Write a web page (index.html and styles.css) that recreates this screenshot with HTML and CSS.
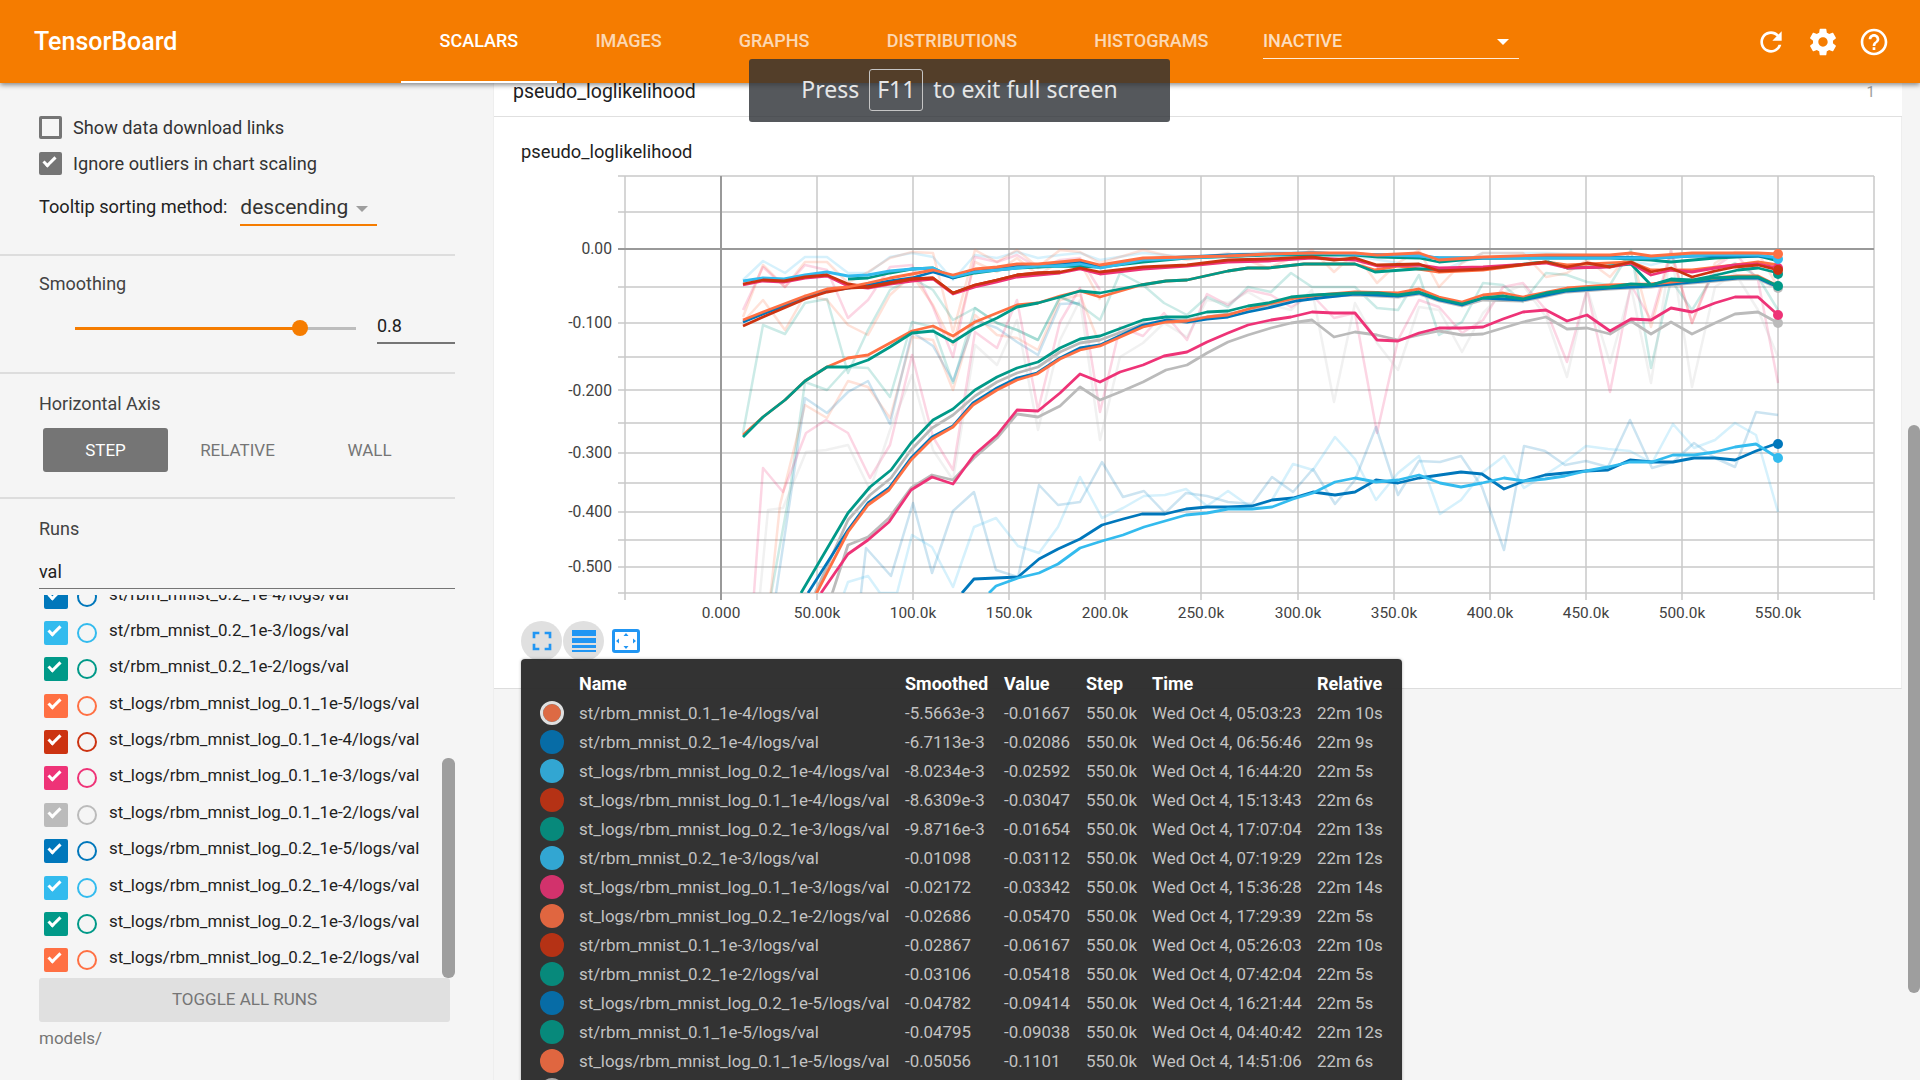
FILE: index.html
```html
<!DOCTYPE html>
<html lang="en">
<head>
  <meta charset="UTF-8">
  <title>TensorBoard</title>
  <link rel="stylesheet" href="styles.css">
</head>
<body>

  <!-- Top bar -->
  <header class="topbar">
    <div class="brand">TensorBoard</div>
    <nav class="tabs">
      <div class="tab selected">SCALARS</div>
      <div class="tab">IMAGES</div>
      <div class="tab">GRAPHS</div>
      <div class="tab">DISTRIBUTIONS</div>
      <div class="tab">HISTOGRAMS</div>
    </nav>
    <div class="inactive">
      <span>INACTIVE</span>
      <i class="inactive-arrow"></i>
    </div>
    <div class="top-icons">
      <svg class="top-icon" viewBox="0 0 24 24"><path d="M17.65 6.35C16.2 4.9 14.21 4 12 4c-4.42 0-7.99 3.58-7.99 8s3.57 8 7.99 8c3.73 0 6.84-2.55 7.73-6h-2.08c-.82 2.33-3.04 4-5.65 4-3.31 0-6-2.69-6-6s2.69-6 6-6c1.66 0 3.14.69 4.22 1.78L13 11h7V4l-2.35 2.35z"/></svg>
      <svg class="top-icon" viewBox="0 0 24 24"><path d="M19.43 12.98c.04-.32.07-.64.07-.98s-.03-.66-.07-.98l2.11-1.65c.19-.15.24-.42.12-.64l-2-3.46c-.12-.22-.39-.3-.61-.22l-2.49 1c-.52-.4-1.08-.73-1.69-.98l-.38-2.65C14.46 2.18 14.25 2 14 2h-4c-.25 0-.46.18-.49.42l-.38 2.65c-.61.25-1.17.59-1.69.98l-2.49-1c-.23-.09-.49 0-.61.22l-2 3.46c-.13.22-.07.49.12.64l2.11 1.65c-.04.32-.07.65-.07.98s.03.66.07.98l-2.11 1.65c-.19.15-.24.42-.12.64l2 3.46c.12.22.39.3.61.22l2.49-1c.52.4 1.08.73 1.69.98l.38 2.65c.03.24.24.42.49.42h4c.25 0 .46-.18.49-.42l.38-2.65c.61-.25 1.17-.59 1.69-.98l2.49 1c.23.09.49 0 .61-.22l2-3.46c.12-.22.07-.49-.12-.64l-2.11-1.65zM12 15.5c-1.93 0-3.5-1.57-3.5-3.5s1.57-3.5 3.5-3.5 3.5 1.57 3.5 3.5-1.57 3.5-3.5 3.5z"/></svg>
      <svg class="top-icon" viewBox="0 0 24 24"><path d="M11 18h2v-2h-2v2zm1-16C6.48 2 2 6.48 2 12s4.48 10 10 10 10-4.48 10-10S17.52 2 12 2zm0 18c-4.41 0-8-3.59-8-8s3.59-8 8-8 8 3.59 8 8-3.59 8-8 8zm0-14c-2.21 0-4 1.79-4 4h2c0-1.1.9-2 2-2s2 .9 2 2c0 2-3 1.75-3 5h2c0-2.25 3-2.5 3-5 0-2.21-1.79-4-4-4z"/></svg>
    </div>
  </header>

  <!-- Browser full screen notice -->
  <div class="fullscreen-note">
    <span>Press</span>
    <span class="key">F11</span>
    <span>to exit full screen</span>
  </div>

  <div class="page">

    <!-- Sidebar -->
    <aside class="sidebar">
      <section class="side-section options">
        <label class="option"><i class="box"></i>Show data download links</label>
        <label class="option"><i class="box checked"></i>Ignore outliers in chart scaling</label>
        <div class="sorting">
          <span>Tooltip sorting method:</span>
          <div class="select">descending<i class="select-arrow"></i></div>
        </div>
      </section>

      <section class="side-section smoothing">
        <div class="side-title">Smoothing</div>
        <div class="slider-row">
          <div class="slider">
            <div class="slider-fill" style="width: 80%"></div>
            <div class="slider-thumb" style="left: 80%"></div>
          </div>
          <div class="slider-value">0.8</div>
        </div>
      </section>

      <section class="side-section axis">
        <div class="side-title">Horizontal Axis</div>
        <div class="axis-buttons">
          <div class="axis-btn active">STEP</div>
          <div class="axis-btn">RELATIVE</div>
          <div class="axis-btn">WALL</div>
        </div>
      </section>

      <section class="runs">
        <div class="side-title">Runs</div>
        <div class="run-filter">val</div>
        <div class="run-list">
          <div class="run-rows">
            <div class="run c-blue"><i class="run-box"></i><i class="run-dot"></i><span>st/rbm_mnist_0.2_1e-4/logs/val</span></div>
            <div class="run c-cyan"><i class="run-box"></i><i class="run-dot"></i><span>st/rbm_mnist_0.2_1e-3/logs/val</span></div>
            <div class="run c-teal"><i class="run-box"></i><i class="run-dot"></i><span>st/rbm_mnist_0.2_1e-2/logs/val</span></div>
            <div class="run c-orange"><i class="run-box"></i><i class="run-dot"></i><span>st_logs/rbm_mnist_log_0.1_1e-5/logs/val</span></div>
            <div class="run c-red"><i class="run-box"></i><i class="run-dot"></i><span>st_logs/rbm_mnist_log_0.1_1e-4/logs/val</span></div>
            <div class="run c-pink"><i class="run-box"></i><i class="run-dot"></i><span>st_logs/rbm_mnist_log_0.1_1e-3/logs/val</span></div>
            <div class="run c-gray"><i class="run-box"></i><i class="run-dot"></i><span>st_logs/rbm_mnist_log_0.1_1e-2/logs/val</span></div>
            <div class="run c-blue"><i class="run-box"></i><i class="run-dot"></i><span>st_logs/rbm_mnist_log_0.2_1e-5/logs/val</span></div>
            <div class="run c-cyan"><i class="run-box"></i><i class="run-dot"></i><span>st_logs/rbm_mnist_log_0.2_1e-4/logs/val</span></div>
            <div class="run c-teal"><i class="run-box"></i><i class="run-dot"></i><span>st_logs/rbm_mnist_log_0.2_1e-3/logs/val</span></div>
            <div class="run c-orange"><i class="run-box"></i><i class="run-dot"></i><span>st_logs/rbm_mnist_log_0.2_1e-2/logs/val</span></div>
          </div>
          <div class="run-scroll"></div>
        </div>
        <div class="toggle-runs">TOGGLE ALL RUNS</div>
        <div class="logdir">models/</div>
      </section>
    </aside>

    <!-- Charts -->
    <main class="content">
      <div class="category">
        <span>pseudo_loglikelihood</span>
        <span class="category-count">1</span>
      </div>

      <div class="card">
        <div class="card-title">pseudo_loglikelihood</div>

        <svg class="chart" viewBox="540 170 1350 450" width="1350" height="450">
          <g class="grid-h">
            <line x1="618" x2="1874" y1="176" y2="176"/>
            <line x1="618" x2="1874" y1="212" y2="212"/>
            <line x1="618" x2="1874" y1="287" y2="287"/>
            <line x1="618" x2="1874" y1="323" y2="323"/>
            <line x1="618" x2="1874" y1="357" y2="357"/>
            <line x1="618" x2="1874" y1="390" y2="390"/>
            <line x1="618" x2="1874" y1="423" y2="423"/>
            <line x1="618" x2="1874" y1="453" y2="453"/>
            <line x1="618" x2="1874" y1="483" y2="483"/>
            <line x1="618" x2="1874" y1="512" y2="512"/>
            <line x1="618" x2="1874" y1="540" y2="540"/>
            <line x1="618" x2="1874" y1="567" y2="567"/>
            <line x1="618" x2="1874" y1="593" y2="593"/>
          </g>
          <g class="grid-v">
            <line x1="625" x2="625" y1="176" y2="600"/>
            <line x1="817" x2="817" y1="176" y2="600"/>
            <line x1="913" x2="913" y1="176" y2="600"/>
            <line x1="1009" x2="1009" y1="176" y2="600"/>
            <line x1="1105" x2="1105" y1="176" y2="600"/>
            <line x1="1201" x2="1201" y1="176" y2="600"/>
            <line x1="1298" x2="1298" y1="176" y2="600"/>
            <line x1="1394" x2="1394" y1="176" y2="600"/>
            <line x1="1490" x2="1490" y1="176" y2="600"/>
            <line x1="1586" x2="1586" y1="176" y2="600"/>
            <line x1="1682" x2="1682" y1="176" y2="600"/>
            <line x1="1778" x2="1778" y1="176" y2="600"/>
            <line x1="1874" x2="1874" y1="176" y2="600"/>
          </g>
          <g class="grid-zero">
            <line x1="618" x2="1874" y1="249" y2="249"/>
            <line x1="721" x2="721" y1="176" y2="600"/>
          </g>

          <g class="tick-y">
            <text x="612" y="254">0.00</text>
            <text x="612" y="328">-0.100</text>
            <text x="612" y="396">-0.200</text>
            <text x="612" y="458">-0.300</text>
            <text x="612" y="517">-0.400</text>
            <text x="612" y="572">-0.500</text>
          </g>
          <g class="tick-x">
            <text x="721" y="618">0.000</text>
            <text x="817" y="618">50.00k</text>
            <text x="913" y="618">100.0k</text>
            <text x="1009" y="618">150.0k</text>
            <text x="1105" y="618">200.0k</text>
            <text x="1201" y="618">250.0k</text>
            <text x="1298" y="618">300.0k</text>
            <text x="1394" y="618">350.0k</text>
            <text x="1490" y="618">400.0k</text>
            <text x="1586" y="618">450.0k</text>
            <text x="1682" y="618">500.0k</text>
            <text x="1778" y="618">550.0k</text>
          </g>

          <clipPath id="plot-area"><rect x="625" y="176" width="1249" height="417"/></clipPath>

          <g clip-path="url(#plot-area)">
            <!-- raw values -->
            <g class="raw">
              <polyline class="c-cyan" points="743,280 763,261 785,273 805,257 827,257 848,273 868,273 890,257 912,253 933,257 953,280 975,255 997,258 1017,252 1038,258 1060,255 1080,253 1100,260 1143,253 1187,257 1268,252 1312,252 1355,256 1398,263 1439,272 1483,253 1546,253 1610,256 1651,265 1692,254 1735,254 1778,257"/>
              <polyline class="c-orange" points="743,317 763,265 785,287 805,262 827,262 848,283 868,272 890,258 912,252 933,253 953,332 975,250 997,262 1017,250 1038,267 1060,250 1080,252 1100,263 1143,250 1187,260 1228,253 1268,268 1312,250 1334,272 1355,253 1377,283 1398,263 1419,250 1439,287 1462,263 1483,253 1523,253 1546,277 1567,273 1587,260 1610,277 1631,252 1651,327 1671,253 1692,323 1715,263 1735,252 1758,253 1778,287"/>
              <polyline class="c-orange" points="743,322 763,300 785,330 805,295 827,300 848,325 868,335 890,295 912,275 933,305 953,345 975,262 997,272 1017,258 1038,275 1060,262 1080,262 1100,300"/>
              <polyline class="c-pink" points="743,310 763,267 785,287 805,265 827,270 848,318 868,300 890,267 912,265 933,307 953,357 975,257 997,262 1017,255 1038,268 1060,260 1080,258 1100,290"/>
              <polyline class="c-teal" points="743,433 763,325 785,334 805,303 827,299 848,373 868,330 890,290 912,278 933,290 953,320 975,308 997,323 1017,330 1038,340 1060,297 1080,305 1100,320 1120,273 1143,285 1164,303 1187,315 1207,297 1228,307 1248,287 1271,292 1291,273 1312,287 1334,287 1355,287 1377,308 1398,310 1419,275 1439,335 1462,322 1483,283 1503,285 1523,302 1546,273 1567,275 1587,282 1610,285 1631,250 1651,368 1671,280 1692,310 1715,273 1735,263 1758,277 1778,310"/>
              <polyline class="c-teal" points="770,600 790,490 805,382 827,390 848,367 868,368 890,397 912,322 933,327 953,383 975,308 997,323 1017,330 1038,340 1060,297 1080,305"/>
              <polyline class="c-orange" points="770,600 780,505 805,405 827,418 848,381 868,387 890,418 912,337 933,340 953,390 975,315 997,335 1017,338 1038,350 1060,300 1080,295 1100,345"/>
              <polyline class="c-blue" points="775,600 790,500 805,398 827,413 848,392 868,381 890,424 912,332 933,346 953,381 975,320 997,328 1017,342 1038,355 1060,304 1080,303"/>
              <polyline class="c-pink" points="754,593 763,468 783,492 806,433 826,420 848,433 870,478 890,445 912,355 933,437 953,470 975,332 997,348 1017,300 1038,410 1060,322 1080,288 1100,412 1120,327 1143,336 1164,313 1187,340 1207,294 1228,305 1248,290 1271,295 1291,307 1312,295 1334,318 1355,313 1377,433 1398,340 1419,300 1439,307 1462,333 1483,320 1503,287 1523,283 1546,310 1567,362 1587,290 1610,392 1631,285 1651,320 1671,250 1692,323 1715,267 1735,253 1758,280 1778,383"/>
              <polyline class="c-gray" points="760,593 768,510 783,508 806,452 826,450 848,445 870,490 890,430 912,375 933,450 953,480 975,345 997,365 1017,320 1038,430 1060,340 1080,300 1100,440 1120,357 1143,343 1164,323 1187,337 1207,300 1228,303 1248,292 1271,305 1291,310 1312,290 1334,402 1355,303 1377,343 1398,370 1419,307 1439,310 1462,352 1483,313 1503,293 1523,285 1546,317 1567,377 1587,288 1610,363 1631,287 1651,383 1671,250 1692,387 1715,287 1735,273 1758,310 1778,357"/>
              <polyline class="c-blue" points="861,593 866,548 891,576 913,503 932,573 953,511 974,492 996,570 1018,577 1039,485 1058,505 1080,502 1102,462 1123,497 1144,491 1165,513 1186,493 1207,496 1228,502 1252,504 1272,477 1293,492 1313,469 1335,504 1355,480 1376,427 1398,495 1419,461 1440,462 1461,456 1482,487 1504,550 1524,446 1545,451 1565,465 1586,461 1608,467 1630,420 1652,468 1673,462 1694,443 1715,458 1735,467 1756,412 1778,415"/>
              <polyline class="c-cyan" points="844,593 848,582 868,576 880,593 897,593 912,535 932,547 953,587 974,527 996,518 1018,546 1039,553 1058,527 1080,477 1102,518 1123,508 1144,496 1165,495 1186,489 1207,506 1228,491 1252,508 1272,500 1293,464 1313,470 1335,437 1355,459 1376,500 1398,473 1419,456 1440,514 1461,500 1482,473 1504,456 1524,488 1545,475 1565,462 1586,446 1608,449 1630,451 1652,463 1673,424 1694,448 1715,440 1735,423 1756,435 1778,512"/>
            </g>

            <!-- smoothed values -->
            <g class="smoothed">
              <polyline class="c-gray" points="812,600 848,520 870,495 891,478 911,450 932,428 953,415 975,396 997,382 1017,373 1038,367 1060,352 1080,343 1100,340 1143,324 1187,320 1228,314 1268,306 1314,297 1355,295 1398,297 1419,294 1439,301 1462,306 1483,300 1523,301 1567,292 1610,289 1651,287 1692,283 1738,279 1758,279 1778,288"/>
              <polyline class="c-gray" points="830,600 848,545 868,537 889,518 911,488 932,475 953,480 974,458 997,438 1017,414 1038,417 1060,406 1080,387 1100,400 1120,392 1143,382 1166,370 1187,365 1207,353 1228,342 1248,335 1271,328 1291,323 1312,320 1334,337 1355,332 1377,335 1398,340 1419,335 1439,331 1462,335 1483,334 1503,328 1523,322 1546,317 1567,329 1587,328 1610,334 1631,321 1651,334 1671,322 1692,334 1715,323 1735,314 1758,312 1778,323"/>
              <polyline class="c-blue" points="808,593 848,530 868,503 889,488 911,458 932,437 953,426 973,403 997,388 1017,378 1037,373 1060,358 1080,348 1100,345 1143,325 1166,320 1187,322 1207,319 1228,317 1248,312 1268,308 1296,301 1319,298 1355,294 1398,296 1419,293 1439,300 1462,305 1483,298 1523,300 1567,291 1610,288 1651,286 1692,282 1738,278 1758,278 1778,287"/>
              <polyline class="c-orange" points="813,600 848,532 868,505 889,490 911,460 932,439 953,427 973,405 997,390 1017,380 1037,374 1060,359 1080,350 1100,346 1143,327 1166,322 1187,321 1207,317 1228,315 1248,309 1268,304 1296,298 1319,295 1355,292 1398,293 1419,289 1439,297 1462,302 1483,295 1503,293 1523,297 1567,288 1610,285 1651,284 1692,280 1738,276 1758,276 1778,286"/>
              <polyline class="c-teal" points="801,593 848,513 870,487 891,470 911,443 933,420 953,409 975,390 997,377 1017,368 1038,362 1060,348 1080,339 1100,336 1143,320 1166,317 1187,317 1207,312 1228,311 1248,306 1268,303 1291,297 1314,295 1355,293 1378,293 1398,295 1419,292 1439,299 1462,304 1483,298 1503,296 1523,299 1546,293 1567,290 1587,288 1610,287 1631,284 1651,285 1671,280 1692,281 1712,278 1738,277 1758,277 1778,286"/>
              <polyline class="c-orange" points="743,435 763,417 785,400 805,381 827,367 848,358 868,355 890,343 912,331 933,326 953,336 975,322 997,313 1017,305 1038,303 1060,296 1080,291 1100,297 1141,285 1166,281 1187,280 1228,271 1248,268 1268,268 1304,264 1355,264 1375,270 1398,266 1439,272 1483,270 1546,262 1567,265 1610,263 1631,262 1651,270 1692,270 1735,265 1758,262 1778,265"/>
              <polyline class="c-teal" points="743,437 763,417 785,400 805,381 827,367 848,367 868,360 890,347 912,333 933,331 953,342 975,328 997,318 1017,307 1038,303 1060,297 1080,291 1100,293 1141,285 1166,281 1187,280 1228,271 1248,268 1268,268 1304,264 1355,264 1375,272 1416,269 1457,269 1498,267 1534,263 1549,262 1567,268 1600,267 1631,264 1651,285 1671,279 1692,280 1712,276 1738,270 1758,268 1778,273"/>
              <polyline class="c-teal" points="848,279 868,278 890,273 912,269 933,268 953,278 975,273 997,270 1017,268 1060,266 1100,267 1143,262 1187,258 1268,255 1355,255 1378,257 1419,258 1439,262 1483,258 1610,258 1651,260 1671,262 1715,258 1758,256 1778,261"/>
              <polyline class="c-blue" points="743,322 763,314 784,306 805,298 827,291 848,288 868,285 890,281 912,278 933,272 953,278 975,271 997,268 1017,265 1038,265 1060,263 1080,262 1100,267 1143,259 1228,255 1312,253 1419,256 1439,258 1483,258 1610,257 1651,258 1692,256 1758,256 1778,258"/>
              <polyline class="c-pink" points="821,593 848,554 868,540 889,522 911,490 932,477 953,484 974,455 997,435 1017,410 1038,411 1060,393 1080,374 1100,382 1120,372 1143,365 1164,356 1187,352 1207,342 1228,333 1248,325 1271,320 1291,317 1312,312 1334,313 1355,313 1377,340 1398,341 1419,333 1439,328 1462,328 1483,327 1503,319 1523,312 1546,310 1567,321 1587,315 1610,331 1631,319 1651,320 1671,308 1692,312 1715,303 1735,297 1758,297 1778,315"/>
              <polyline class="c-pink" points="743,285 763,281 784,282 805,278 827,276 848,286 868,288 890,284 912,281 933,279 953,294 975,287 997,282 1017,277 1038,275 1060,273 1080,269 1100,274 1143,269 1187,266 1228,262 1268,261 1312,258 1355,260 1377,266 1419,265 1439,268 1483,267 1546,263 1567,268 1610,267 1631,263 1651,275 1671,270 1692,272 1715,268 1735,265 1758,264 1778,268"/>
              <polyline class="c-cyan" points="743,281 763,278 784,279 805,275 827,272 848,276 868,275 890,271 912,269 933,268 953,277 975,272 997,270 1017,268 1038,266 1060,266 1080,264 1100,268 1143,260 1228,256 1312,253 1419,256 1439,258 1483,258 1610,258 1651,258 1712,255 1758,255 1778,258"/>
              <polyline class="c-blue" points="962,593 974,579 996,578 1018,577 1039,559 1058,549 1080,539 1102,525 1123,519 1142,514 1165,514 1186,509 1207,507 1228,507 1252,506 1272,500 1293,498 1313,492 1335,495 1355,492 1376,480 1398,483 1419,478 1440,475 1461,472 1482,474 1504,489 1524,481 1545,475 1565,473 1586,471 1608,470 1630,460 1652,462 1673,462 1694,458 1715,458 1735,460 1756,451 1778,443"/>
              <polyline class="c-cyan" points="989,593 996,586 1018,578 1039,573 1058,564 1080,548 1102,541 1123,535 1144,527 1165,521 1186,515 1207,513 1228,509 1252,509 1272,507 1293,499 1313,493 1335,482 1355,478 1376,482 1398,480 1419,475 1440,483 1461,487 1482,483 1504,478 1524,481 1545,479 1565,476 1586,471 1608,467 1630,462 1652,462 1673,455 1694,455 1715,452 1735,447 1756,444 1778,458"/>
              <polyline class="c-red" points="743,326 763,317 784,308 805,299 827,292 848,288 868,287 890,283 912,279 933,278 953,293 975,285 997,280 1017,275 1038,273 1060,272"/>
              <polyline class="c-red" points="743,284 763,280 784,281 805,277 827,275 848,284 868,287 890,283 912,279 933,278 953,293 975,285 997,280 1017,275 1038,273 1060,272 1080,268 1100,272 1143,267 1187,265 1228,260 1268,259 1312,257 1334,260 1355,258 1377,265 1419,264 1439,271 1483,269 1546,262 1567,267 1587,263 1610,267 1631,262 1651,272 1671,268 1692,277 1715,271 1735,267 1758,265 1778,270"/>
              <polyline class="c-orange" points="743,320 763,312 784,304 805,296 827,289 848,287 868,283 890,278 912,274 933,270 953,275 975,269 997,267 1017,264 1038,264 1060,262 1080,260 1100,265 1143,258 1187,257 1228,256 1268,254 1312,253 1355,253 1377,255 1419,253 1439,260 1483,257 1546,255 1610,255 1631,253 1651,256 1692,253 1758,253 1778,254"/>
            </g>

            <!-- last step markers -->
            <g class="markers">
              <circle class="c-gray" cx="1778" cy="288" r="5"/>
              <circle class="c-gray" cx="1778" cy="323" r="5"/>
              <circle class="c-pink" cx="1778" cy="315" r="5"/>
              <circle class="c-teal" cx="1778" cy="286" r="5"/>
              <circle class="c-pink" cx="1778" cy="268" r="5"/>
              <circle class="c-teal" cx="1778" cy="274" r="5"/>
              <circle class="c-red" cx="1778" cy="270" r="5"/>
              <circle class="c-cyan" cx="1778" cy="259" r="5"/>
              <circle class="c-orange" cx="1778" cy="254" r="5"/>
              <circle class="c-cyan" cx="1778" cy="458" r="5"/>
              <circle class="c-blue" cx="1778" cy="444" r="5"/>
            </g>
          </g>
        </svg>

        <!-- Chart buttons -->
        <div class="chart-tools">
          <div class="tool-round">
            <svg class="tool-icon" viewBox="0 0 24 24"><path d="M7 14H5v5h5v-2H7v-3zm-2-4h2V7h3V5H5v5zm12 7h-3v2h5v-5h-2v3zM14 5v2h3v3h2V5h-5z"/></svg>
          </div>
          <div class="tool-round">
            <svg class="tool-icon list" viewBox="0 0 24 22"><path d="M0 0h24v6H0zM0 8h24v5H0zM0 15h24v3H0zM0 20h24v2H0z"/></svg>
          </div>
          <div class="tool-fit">
            <svg class="tool-icon fit" viewBox="0 0 22 18"><path d="M11 1l2.500 3h-5zM11 17l2.500-3h-5zM1 9l3-2.500v5zM21 9l-3-2.500v5z"/></svg>
          </div>
        </div>

        <!-- Tooltip -->
        <div class="chart-tooltip">
          <table class="tip-table">
            <thead>
              <tr><th></th><th>Name</th><th>Smoothed</th><th>Value</th><th>Step</th><th>Time</th><th>Relative</th></tr>
            </thead>
            <tbody>
              <tr class="c-orange closest"><td><i class="swatch"></i></td><td>st/rbm_mnist_0.1_1e-4/logs/val</td><td>-5.5663e-3</td><td>-0.01667</td><td>550.0k</td><td>Wed Oct 4, 05:03:23</td><td>22m 10s</td></tr>
              <tr class="c-blue"><td><i class="swatch"></i></td><td>st/rbm_mnist_0.2_1e-4/logs/val</td><td>-6.7113e-3</td><td>-0.02086</td><td>550.0k</td><td>Wed Oct 4, 06:56:46</td><td>22m 9s</td></tr>
              <tr class="c-cyan"><td><i class="swatch"></i></td><td>st_logs/rbm_mnist_log_0.2_1e-4/logs/val</td><td>-8.0234e-3</td><td>-0.02592</td><td>550.0k</td><td>Wed Oct 4, 16:44:20</td><td>22m 5s</td></tr>
              <tr class="c-red"><td><i class="swatch"></i></td><td>st_logs/rbm_mnist_log_0.1_1e-4/logs/val</td><td>-8.6309e-3</td><td>-0.03047</td><td>550.0k</td><td>Wed Oct 4, 15:13:43</td><td>22m 6s</td></tr>
              <tr class="c-teal"><td><i class="swatch"></i></td><td>st_logs/rbm_mnist_log_0.2_1e-3/logs/val</td><td>-9.8716e-3</td><td>-0.01654</td><td>550.0k</td><td>Wed Oct 4, 17:07:04</td><td>22m 13s</td></tr>
              <tr class="c-cyan"><td><i class="swatch"></i></td><td>st/rbm_mnist_0.2_1e-3/logs/val</td><td>-0.01098</td><td>-0.03112</td><td>550.0k</td><td>Wed Oct 4, 07:19:29</td><td>22m 12s</td></tr>
              <tr class="c-pink"><td><i class="swatch"></i></td><td>st_logs/rbm_mnist_log_0.1_1e-3/logs/val</td><td>-0.02172</td><td>-0.03342</td><td>550.0k</td><td>Wed Oct 4, 15:36:28</td><td>22m 14s</td></tr>
              <tr class="c-orange"><td><i class="swatch"></i></td><td>st_logs/rbm_mnist_log_0.2_1e-2/logs/val</td><td>-0.02686</td><td>-0.05470</td><td>550.0k</td><td>Wed Oct 4, 17:29:39</td><td>22m 5s</td></tr>
              <tr class="c-red"><td><i class="swatch"></i></td><td>st/rbm_mnist_0.1_1e-3/logs/val</td><td>-0.02867</td><td>-0.06167</td><td>550.0k</td><td>Wed Oct 4, 05:26:03</td><td>22m 10s</td></tr>
              <tr class="c-teal"><td><i class="swatch"></i></td><td>st/rbm_mnist_0.2_1e-2/logs/val</td><td>-0.03106</td><td>-0.05418</td><td>550.0k</td><td>Wed Oct 4, 07:42:04</td><td>22m 5s</td></tr>
              <tr class="c-blue"><td><i class="swatch"></i></td><td>st_logs/rbm_mnist_log_0.2_1e-5/logs/val</td><td>-0.04782</td><td>-0.09414</td><td>550.0k</td><td>Wed Oct 4, 16:21:44</td><td>22m 5s</td></tr>
              <tr class="c-teal"><td><i class="swatch"></i></td><td>st/rbm_mnist_0.1_1e-5/logs/val</td><td>-0.04795</td><td>-0.09038</td><td>550.0k</td><td>Wed Oct 4, 04:40:42</td><td>22m 12s</td></tr>
              <tr class="c-orange"><td><i class="swatch"></i></td><td>st_logs/rbm_mnist_log_0.1_1e-5/logs/val</td><td>-0.05056</td><td>-0.1101</td><td>550.0k</td><td>Wed Oct 4, 14:51:06</td><td>22m 6s</td></tr>
              <tr class="c-gray"><td><i class="swatch"></i></td><td></td><td></td><td></td><td></td><td></td><td></td></tr>
            </tbody>
          </table>
        </div>
      </div>
    </main>

    <div class="page-scroll"><div class="page-thumb"></div></div>
  </div>
</body>
</html>
```

FILE: styles.css
```css
html, body {
  height: 100%;
}
body {
  margin: 0;
  font-family: Roboto, "Liberation Sans", sans-serif;
  background-color: #f5f5f5;
  color: #212121;
  overflow: hidden;
  display: flex;
  flex-direction: column;
}
i {
  display: block;
}

/* run colours */
.c-orange { --run: #ff7043; }
.c-blue { --run: #0077bb; }
.c-cyan { --run: #33bbee; }
.c-red { --run: #cc3311; }
.c-teal { --run: #009988; }
.c-pink { --run: #ee3377; }
.c-gray { --run: #bbbbbb; }

/* top bar */
.topbar {
  height: 83px;
  flex: none;
  display: flex;
  align-items: center;
  background-color: #f57c00;
  color: white;
  box-shadow: 0 2px 5px rgba(0, 0, 0, 0.45);
  position: relative;
  z-index: 2;
}
.brand {
  width: 401px;
  box-sizing: border-box;
  padding-left: 34px;
  font-size: 25px;
  font-weight: 500;
}
.tabs {
  display: flex;
  align-self: stretch;
}
.tab {
  display: flex;
  align-items: center;
  padding: 0 38.600px 2px;
  font-size: 18px;
  font-weight: 500;
  opacity: 0.7;
  box-sizing: border-box;
}
.tab.selected {
  opacity: 1;
  border-bottom: 2px solid white;
  padding-bottom: 0;
}
.inactive {
  width: 256px;
  height: 34px;
  margin-left: 16px;
  padding-top: 5px;
  box-sizing: border-box;
  display: flex;
  justify-content: space-between;
  align-items: flex-start;
  border-bottom: 1px solid rgba(255, 255, 255, 0.85);
  font-size: 18px;
  font-weight: 500;
  color: rgba(255, 255, 255, 0.75);
}
.inactive-arrow {
  width: 0;
  height: 0;
  margin: 9px 10px 0 0;
  border-left: 6px solid transparent;
  border-right: 6px solid transparent;
  border-top: 6px solid white;
}
.top-icons {
  margin-left: auto;
  padding-right: 30px;
  display: flex;
  gap: 19.5px;
}
.top-icon {
  width: 32px;
  height: 32px;
  fill: white;
  display: block;
}

/* browser notice */
.fullscreen-note {
  position: absolute;
  left: 749px;
  top: 59px;
  width: 421px;
  height: 63px;
  z-index: 3;
  box-sizing: border-box;
  border-radius: 3px;
  display: flex;
  align-items: center;
  justify-content: center;
  gap: 10px;
  padding-bottom: 1px;
  background-color: rgba(42, 46, 51, 0.8);
  color: #e6e6e6;
  font-family: "Noto Sans", sans-serif;
  font-size: 23px;
}
.fullscreen-note > span:not(.key) {
  margin-bottom: 3px;
}
.key {
  width: 54px;
  height: 42px;
  box-sizing: border-box;
  padding-bottom: 3px;
  border: 1px solid #c5c5c5;
  border-radius: 3px;
  display: flex;
  align-items: center;
  justify-content: center;
}

/* main layout */
.page {
  flex: 1;
  min-height: 0;
  display: flex;
}
.sidebar {
  width: 494px;
  flex: none;
  box-sizing: border-box;
  padding-right: 38px;
  border-right: 1px solid #eeeeee;
  overflow: hidden;
}
.side-section {
  padding-left: 39px;
  border-bottom: 2px solid #dddddd;
  box-sizing: border-box;
}
.side-title {
  font-size: 18px;
  line-height: 22px;
  color: #424242;
}

/* options */
.options {
  height: 173px;
  padding-top: 33px;
}
.option {
  display: flex;
  align-items: center;
  gap: 11px;
  height: 23px;
  margin-bottom: 13px;
  font-size: 18.200px;
  color: #333333;
}
.box {
  width: 23px;
  height: 23px;
  box-sizing: border-box;
  border: 3px solid #757575;
  border-radius: 2px;
  position: relative;
}
.box.checked {
  background-color: #757575;
}
.box.checked::after,
.run-box::after {
  content: "";
  position: absolute;
  left: 7px;
  top: 2px;
  width: 7px;
  height: 13px;
  box-sizing: border-box;
  border-right: 3px solid white;
  border-bottom: 3px solid white;
  transform: rotate(45deg);
}
.box.checked::after {
  left: 4px;
  top: -1px;
}
.sorting {
  display: flex;
  align-items: flex-start;
  gap: 13px;
  margin-top: 19px;
  font-size: 18.200px;
  color: #212121;
}
.sorting > span {
  line-height: 24px;
  margin-top: 1px;
}
.select {
  width: 137px;
  height: 37px;
  margin-top: -5px;
  box-sizing: border-box;
  border-bottom: 2px solid #f57c00;
  display: flex;
  align-items: center;
  font-size: 21px;
  color: #333333;
}
.select-arrow {
  width: 0;
  height: 0;
  margin-left: 8px;
  margin-top: 5px;
  border-left: 6px solid transparent;
  border-right: 6px solid transparent;
  border-top: 6px solid #9e9e9e;
}

/* smoothing */
.smoothing {
  height: 118px;
  padding-top: 17px;
}
.slider-row {
  display: flex;
  margin-top: 11px;
}
.slider {
  width: 281px;
  height: 3px;
  margin: 21px 21px 0 36px;
  background-color: #bdbdbd;
  position: relative;
}
.slider-fill {
  height: 100%;
  background-color: #f57c00;
}
.slider-thumb {
  position: absolute;
  top: -7px;
  width: 16px;
  height: 16px;
  margin-left: -8px;
  border-radius: 50%;
  background-color: #f57c00;
}
.slider-value {
  width: 78px;
  height: 36px;
  line-height: 36px;
  margin-top: 2px;
  box-sizing: border-box;
  border-bottom: 2px solid #757575;
  font-size: 18px;
}

/* horizontal axis */
.axis {
  height: 125px;
  padding-top: 19px;
}
.axis-buttons {
  display: flex;
  margin: 13px 0 0 4px;
}
.axis-btn {
  width: 125px;
  height: 44px;
  margin-right: 7px;
  border-radius: 3px;
  display: flex;
  align-items: center;
  justify-content: center;
  font-size: 17px;
  color: #757575;
}
.axis-btn.active {
  background-color: #757575;
  color: white;
}

/* runs */
.runs {
  padding-left: 39px;
  padding-top: 19px;
}
.run-filter {
  height: 38px;
  margin-top: 11px;
  padding-top: 8px;
  line-height: 25px;
  box-sizing: border-box;
  border-bottom: 1px solid #757575;
  font-size: 18px;
}
.run-list {
  height: 383px;
  margin-top: 6px;
  overflow: hidden;
  position: relative;
}
.run-rows {
  margin-top: -16.700px;
  padding-left: 5px;
}
.run {
  height: 36.400px;
  display: flex;
  align-items: center;
  font-size: 16.900px;
  color: #212121;
}
.run-box {
  width: 24px;
  height: 24px;
  border-radius: 2px;
  background-color: var(--run);
  position: relative;
}
.run-dot {
  width: 20px;
  height: 20px;
  margin: 0 12px 0 9px;
  box-sizing: border-box;
  border: 2px solid var(--run);
  border-radius: 50%;
}
.run span {
  margin-bottom: 6px;
}
.run-scroll {
  position: absolute;
  right: 0;
  bottom: 0;
  width: 13px;
  height: 220px;
  border-radius: 6px;
  background-color: #9e9e9e;
}
.toggle-runs {
  width: 411px;
  height: 44px;
  padding-bottom: 2px;
  box-sizing: border-box;
  border-radius: 3px;
  display: flex;
  align-items: center;
  justify-content: center;
  background-color: #e0e0e0;
  color: #757575;
  font-size: 17px;
}
.logdir {
  margin-top: 5px;
  line-height: 22px;
  font-size: 17px;
  color: #757575;
}

/* charts */
.content {
  width: 1408px;
  flex: none;
  overflow: hidden;
}
.category {
  height: 34px;
  box-sizing: border-box;
  padding: 0 27px 0 19px;
  display: flex;
  justify-content: space-between;
  background-color: white;
  line-height: 18px;
  font-size: 19.500px;
  border-bottom: 1px solid #e0e0e0;
}
.category-count {
  font-size: 15px;
  color: #9e9e9e;
}
.card {
  height: 572px;
  box-sizing: border-box;
  padding: 24px 0 0 46px;
  background-color: white;
  border-bottom: 1px solid #dddddd;
  border-right: 1px solid #eeeeee;
  position: relative;
}
.card-title {
  height: 29px;
  margin-left: -19px;
  line-height: 22px;
  font-size: 18.300px;
}
.chart {
  display: block;
}
.grid-h line {
  stroke: #d6d6d6;
  stroke-width: 2;
}
.grid-v line {
  stroke: #c8c8c8;
  stroke-width: 1.5;
}
.grid-zero line {
  stroke: #999999;
  stroke-width: 2;
}
.tick-y text,
.tick-x text {
  fill: #424242;
}
.tick-y text {
  font-size: 15.700px;
  text-anchor: end;
}
.tick-x text {
  font-size: 15.400px;
  text-anchor: middle;
}
polyline {
  fill: none;
  stroke: var(--run);
  stroke-linejoin: round;
}
.raw polyline {
  stroke-width: 2.500;
  opacity: 0.2;
}
.smoothed polyline {
  stroke-width: 2.800;
}
.markers circle {
  fill: var(--run);
}

/* chart buttons */
.chart-tools {
  position: absolute;
  left: 27px;
  top: 504px;
  display: flex;
  align-items: center;
  gap: 1px;
}
.tool-round {
  width: 41px;
  height: 40px;
  border-radius: 50%;
  background-color: #e0e0e0;
  display: flex;
  align-items: center;
  justify-content: center;
}
.tool-icon {
  width: 32px;
  height: 32px;
  fill: #2196f3;
  display: block;
}
.tool-icon.list {
  width: 24px;
  height: 22px;
}
.tool-fit {
  width: 28px;
  height: 24px;
  margin-left: 7px;
  box-sizing: border-box;
  border: 3px solid #2196f3;
  border-radius: 3px;
  display: flex;
  align-items: center;
  justify-content: center;
}
.tool-icon.fit {
  width: 22px;
  height: 18px;
}

/* tooltip */
.chart-tooltip {
  position: absolute;
  left: 27px;
  top: 542px;
  width: 881px;
  height: 440px;
  box-sizing: border-box;
  padding-top: 10px;
  border-radius: 4px;
  background-color: rgba(40, 40, 40, 0.95);
  box-shadow: 0 0 3px rgba(0, 0, 0, 0.3);
}
.tip-table {
  border-collapse: collapse;
  table-layout: fixed;
  width: 881px;
  color: #c2c2c2;
  font-size: 16.900px;
}
.tip-table th,
.tip-table td {
  height: 29px;
  padding: 0;
  text-align: left;
  white-space: nowrap;
}
.tip-table th {
  color: white;
  font-size: 18px;
  font-weight: 700;
}
.tip-table th:nth-child(1) { width: 58px; }
.tip-table th:nth-child(2) { width: 326px; }
.tip-table th:nth-child(3) { width: 99px; }
.tip-table th:nth-child(4) { width: 82px; }
.tip-table th:nth-child(5) { width: 66px; }
.tip-table th:nth-child(6) { width: 165px; }
.swatch {
  width: 24px;
  height: 24px;
  margin-left: 19px;
  box-sizing: border-box;
  border-radius: 50%;
  background-color: var(--run);
  opacity: 0.85;
}
.closest .swatch {
  border: 3px solid #e0e0e0;
  background-clip: padding-box;
  opacity: 1;
  background-color: #dd6a44;
}

/* page scrollbar */
.page-scroll {
  flex: 1;
  padding: 342px 0 0 6px;
}
.page-thumb {
  height: 568px;
  border-radius: 6px;
  background-color: #9e9e9e;
}
```
